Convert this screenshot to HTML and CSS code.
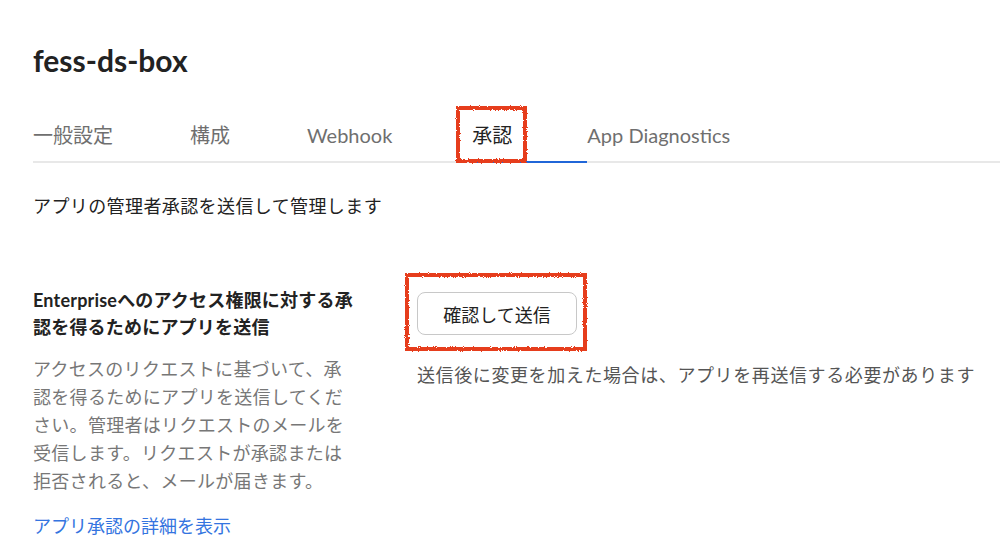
FILE: index.html
```html
<!DOCTYPE html>
<html lang="ja">
<head>
    <meta charset="UTF-8">
    <meta name="viewport" content="width=device-width, initial-scale=1.0">
    <title>fess-ds-box</title>
    <link rel="stylesheet" href="styles.css">
</head>
<body>
    <!-- rough edge for the hand drawn red boxes -->
    <svg class="defs" width="0" height="0">
        <filter id="rough">
            <feTurbulence type="fractalNoise" baseFrequency="0.9" numOctaves="2" seed="3"/>
            <feDisplacementMap in="SourceGraphic" scale="3"/>
        </filter>
    </svg>

    <h1 class="app-title">fess-ds-box</h1>

    <nav class="tabs">
        <a class="tab">一般設定</a>
        <a class="tab">構成</a>
        <a class="tab tab-webhook">Webhook</a>
        <a class="tab active">承認<span class="mark mark-tab"></span></a>
        <a class="tab">App Diagnostics</a>
    </nav>

    <p class="intro">アプリの管理者承認を送信して管理します</p>

    <section class="approval">
        <div class="approval-info">
            <h2>Enterpriseへのアクセス権限に対する承認を得るためにアプリを送信</h2>
            <p>アクセスのリクエストに基づいて、承認を得るためにアプリを送信してください。管理者はリクエストのメールを受信します。リクエストが承認または拒否されると、メールが届きます。</p>
            <a class="more-link" href="#">アプリ承認の詳細を表示</a>
        </div>
        <div class="approval-action">
            <div class="button-wrap">
                <button type="button" class="submit-button">確認して送信</button>
                <span class="mark mark-button"></span>
            </div>
            <p class="note">送信後に変更を加えた場合は、アプリを再送信する必要があります</p>
        </div>
    </section>
</body>
</html>
```

FILE: styles.css
```css
body {
  margin: 0;
  padding: 0 0 0 33px;
  font-family: Lato, "Noto Sans CJK JP", sans-serif;
  color: #222;
  background: #fff;
  overflow: hidden;
}

.defs {
  position: absolute;
}

.app-title {
  font-size: 30px;
  font-weight: 700;
  margin: 40px 0 0;
  line-height: 40px;
}

.tabs {
  display: flex;
  margin-top: 41px;
  border-bottom: 2px solid #e8e8e8;
}

.tab {
  position: relative;
  padding: 0 77px 12px 0;
  font-size: 20px;
  line-height: 28px;
  color: #6f6f6f;
  margin-bottom: -2px;
  border-bottom: 2px solid transparent;
}

.tab-webhook {
  padding-right: 80px;
}

.tab:last-child {
  padding-right: 0;
}

.tab.active {
  padding-right: 75px;
  color: #222;
  border-bottom-color: #2066d8;
}

.intro {
  margin: 29px 0 0;
  font-size: 18px;
  letter-spacing: 0.4px;
  line-height: 28px;
}

.approval {
  display: flex;
  margin-top: 67px;
}

.approval-info {
  width: 330px;
  flex: none;
}

.approval-info h2 {
  width: 334px;
  margin: 0;
  font-size: 18px;
  font-weight: 700;
  line-height: 27px;
  letter-spacing: 0.2px;
}

.approval-info p {
  width: 322px;
  margin: 14px 0 0;
  font-size: 18px;
  line-height: 28px;
  letter-spacing: 0.3px;
  color: #777;
}

.more-link {
  display: block;
  margin-top: 17px;
  font-size: 18px;
  line-height: 28px;
  color: #3474e0;
  text-decoration: none;
}

.approval-action {
  margin-left: 54px;
  padding-top: 5px;
}

.button-wrap {
  position: relative;
  display: inline-block;
}

.submit-button {
  width: 160px;
  height: 43px;
  background: #fff;
  border: 1px solid #c8c8c8;
  border-radius: 8px;
  font-family: Lato, "Noto Sans CJK JP", sans-serif;
  font-size: 18px;
  color: #222;
}

.note {
  margin: 26px 0 0;
  font-size: 18px;
  letter-spacing: 0.6px;
  color: #555;
  white-space: nowrap;
}

/* hand drawn red highlight boxes */
.mark {
  position: absolute;
  border: 4px solid #e63c1e;
  filter: url(#rough);
  pointer-events: none;
}

.mark-tab {
  left: -16px;
  top: -15px;
  width: 63px;
  height: 49px;
}

.mark-button {
  left: -12px;
  top: -19px;
  width: 174px;
  height: 70px;
}
```
